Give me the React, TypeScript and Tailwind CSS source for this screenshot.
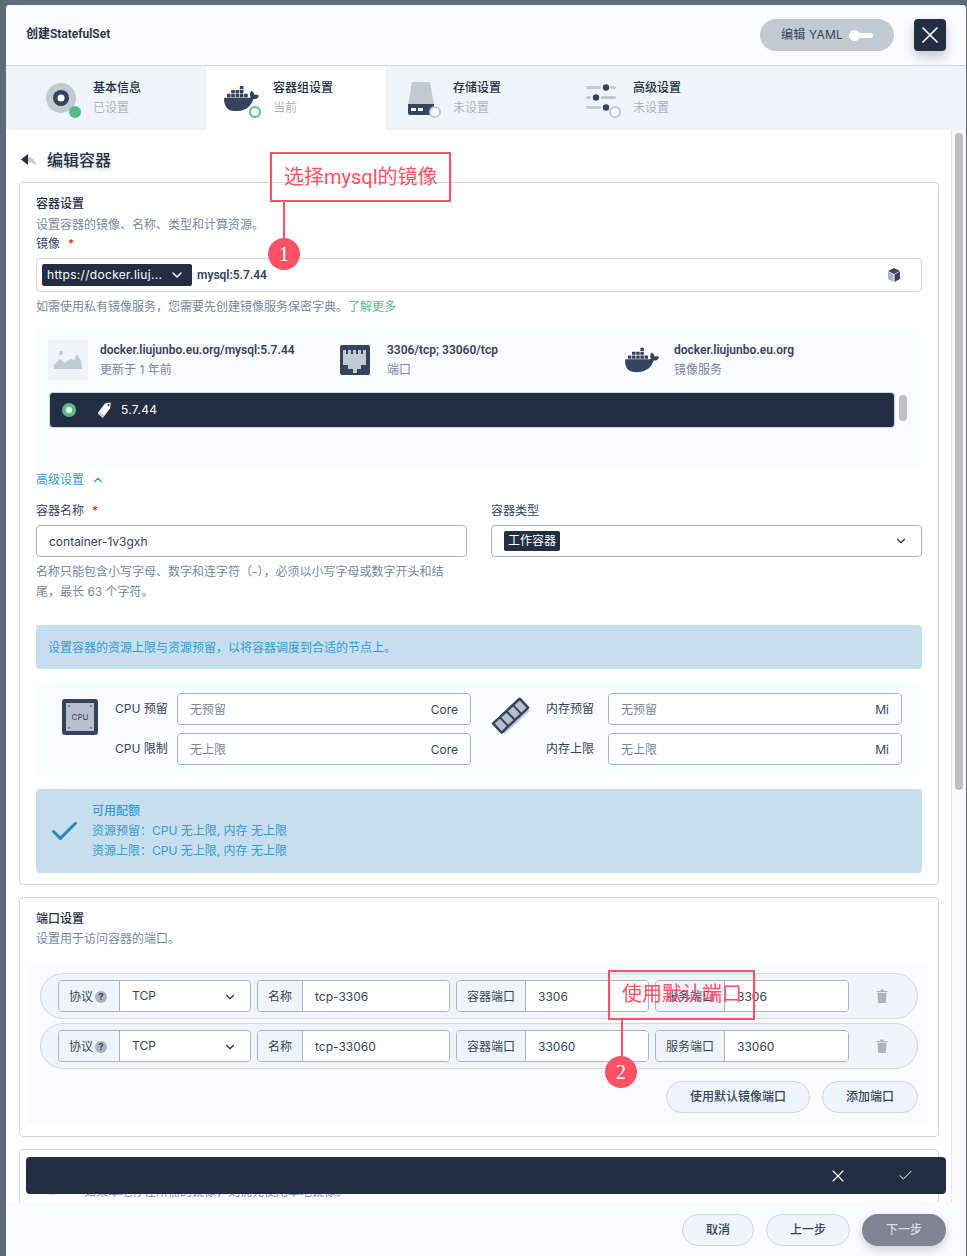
import React from "react";
import { SiDocker } from "react-icons/si";
import { ChevronDown, ChevronUp, X, Check } from "lucide-react";

const font = { fontFamily: 'Inter, "Noto Sans CJK SC", sans-serif' };
const BOLD = "font-[Roboto,'Noto_Sans_CJK_SC',sans-serif] font-semibold";
const MED = "font-medium";

function Badge({ kind }: { kind: "done" | "cur" | "todo" }) {
  const cls =
    kind === "done"
      ? "bg-[#55bc8a]"
      : kind === "cur"
        ? "bg-white border-2 border-[#55bc8a]"
        : "bg-white border-2 border-[#c1c9d1]";
  return <span className={"absolute left-[26px] top-[26px] w-3 h-3 rounded-full " + cls} />;
}

function Tab({ icon, title, sub, badge, active }: { icon: React.ReactNode; title: string; sub: string; badge: "done" | "cur" | "todo"; active?: boolean }) {
  return (
    <div className={"w-[180px] flex items-center pl-[17px] gap-[14px] " + (active ? "bg-white" : "")}>
      <div className="relative w-9 h-9 flex items-center justify-center">
        {icon}
        <Badge kind={badge} />
      </div>
      <div>
        <div className={"text-[12px] leading-5 text-[#242e42] " + MED}>{title}</div>
        <div className="text-[12px] leading-5 text-[#abb4be]">{sub}</div>
      </div>
    </div>
  );
}

function DiscIcon() {
  return (
    <svg width="30" height="30" viewBox="0 0 30 30">
      <circle cx="15" cy="15" r="15" fill="#c1c9d1" />
      <circle cx="15" cy="15" r="8" fill="#36435c" />
      <circle cx="15" cy="15" r="3.5" fill="#fff" />
    </svg>
  );
}

function DiskIcon() {
  return (
    <svg width="28" height="34" viewBox="0 0 28 34">
      <path d="M5 1h18l4 23H1z" fill="#c1c9d1" />
      <path d="M1 23h26v9a2 2 0 0 1-2 2H3a2 2 0 0 1-2-2z" fill="#36435c" />
      <rect x="4" y="27" width="5" height="3" fill="#fff" />
      <rect x="11" y="27" width="5" height="3" fill="#fff" />
    </svg>
  );
}

function SlidersIcon() {
  return (
    <svg width="30" height="30" viewBox="0 0 30 30">
      <g fill="#c1c9d1">
        <rect x="0" y="3" width="15" height="3" rx="1.5" />
        <rect x="24" y="3" width="6" height="3" rx="1.5" />
        <rect x="0" y="13" width="5" height="3" rx="1.5" />
        <rect x="15" y="13" width="15" height="3" rx="1.5" />
        <rect x="0" y="23" width="15" height="3" rx="1.5" />
      </g>
      <g fill="#36435c">
        <circle cx="20" cy="4.5" r="3.2" />
        <circle cx="10" cy="14.5" r="3.2" />
        <circle cx="20" cy="24.5" r="3.2" />
      </g>
    </svg>
  );
}

function BackIcon() {
  return (
    <svg width="16" height="14" viewBox="0 0 16 14">
      <path d="M7 4c4 0 7 3 8.500 9C13 10 10.500 9 7 9z" fill="#c1c9d1" />
      <path d="M7 1v11L0 6.500z" fill="#242e42" />
    </svg>
  );
}

function CubeIcon() {
  return (
    <svg width="12" height="14" viewBox="0 0 12 14">
      <path d="M6 0l6 3-6 3-6-3z" fill="#36435c" />
      <path d="M0 3.500l5.500 3V14L0 11z" fill="#abb4be" />
      <path d="M12 3.500l-5.500 3V14L12 11z" fill="#36435c" />
    </svg>
  );
}

function ImageIcon() {
  return (
    <div className="w-10 h-10 bg-[#eff4f9] rounded-[2px] flex items-center justify-center">
      <svg width="28" height="20" viewBox="0 0 28 20">
        <circle cx="7" cy="3" r="2" fill="#c1c9d1" />
        <path d="M0 19v-4l6-6 5 4 5-4 4 1 3-6 4 7 1 8z" fill="#c1c9d1" />
      </svg>
    </div>
  );
}

function PortIcon() {
  return (
    <svg width="30" height="30" viewBox="0 0 30 30">
      <rect width="30" height="30" rx="2" fill="#36435c" />
      <path d="M3 5h3v4h2V5h3v4h2V5h3v4h2V5h3v4h2V5h3v15h-5v4h-4v4h-4v-4H8v-4H3z" fill="#c1c9d1" />
    </svg>
  );
}

function TagIcon() {
  return (
    <svg width="15" height="16" viewBox="0 0 15 16">
      <path d="M8 1.500L12.500 0.500a1 1 0 0 1 1.200 1.200L13 6.500 6.500 15a1 1 0 0 1-1.400 0.200L1.300 12a1 1 0 0 1-0.200-1.400z" fill="#fff" />
      <path d="M6.500 15a1 1 0 0 1-1.400 0.200L1.300 12a1 1 0 0 1-0.200-1.400l0.900-1.100 5.500 4.300z" fill="#c1c9d1" />
      <circle cx="11.500" cy="3" r="1" fill="#242e42" />
    </svg>
  );
}

function CpuIcon() {
  return (
    <svg width="36" height="36" viewBox="0 0 36 36" className="mt-[6px] shrink-0">
      <rect width="36" height="36" rx="3" fill="#36435c" />
      <rect x="4" y="4" width="28" height="28" fill="#b6c1cd" />
      <g fill="#36435c">
        <circle cx="7" cy="7" r="0.8" />
        <circle cx="29" cy="7" r="0.8" />
        <circle cx="7" cy="29" r="0.8" />
        <circle cx="29" cy="29" r="0.8" />
      </g>
      <text x="18" y="20.5" textAnchor="middle" fontSize="8" fill="#36435c" style={font}>CPU</text>
    </svg>
  );
}

function MemIcon() {
  return (
    <svg width="40" height="40" viewBox="0 0 40 40" className="mt-[3px] shrink-0">
      <g transform="rotate(-43 20 20)">
        <rect x="3" y="26" width="34" height="3" fill="#c1c9d1" />
        <rect x="0.500" y="12" width="39" height="15" rx="1.500" fill="#36435c" />
        <g fill="#b6c1cd">
          <rect x="3" y="14.500" width="7" height="10" />
          <rect x="12" y="14.500" width="7" height="10" />
          <rect x="21" y="14.500" width="7" height="10" />
          <rect x="30" y="14.500" width="7" height="10" />
        </g>
      </g>
    </svg>
  );
}

function TrashIcon() {
  return (
    <svg width="12" height="14" viewBox="0 0 12 14">
      <path d="M0.500 2h3.500l0.500-1.500h3L8 2h3.500v1.200H0.500z" fill="#abb4be" />
      <path d="M1.500 4h9l-0.700 9.500a0.500 0.500 0 0 1-0.500 0.500H2.700a0.500 0.500 0 0 1-0.500-0.500z" fill="#abb4be" />
    </svg>
  );
}

function FieldBox({ w, text, unit, placeholder }: { w: string; text: string; unit?: string; placeholder?: boolean }) {
  return (
    <div className={"h-8 border border-[#abb4be] rounded-[4px] bg-white flex items-center justify-between pl-3 pr-3 pt-px text-[12px] " + w}>
      <span className={placeholder ? "text-[#79879c]" : "text-[#36435c]"}>{text}</span>
      {unit && <span className="text-[#36435c]">{unit}</span>}
    </div>
  );
}

function PortGroup({ label, value, labelW, w, select }: { label: React.ReactNode; value: string; labelW: string; w: string; select?: boolean }) {
  return (
    <div className={"h-8 flex border border-[#abb4be] rounded-[4px] overflow-hidden text-[12px] text-[#36435c] " + w}>
      <div className={"bg-[#eff4f9] border-r border-[#abb4be] flex items-center justify-center pt-px " + labelW}>{label}</div>
      <div className="flex-1 bg-white flex items-center justify-between pl-3 pr-[13px] pt-px">
        <span className={select ? "-translate-y-px" : ""}>{value}</span>
        {select && <ChevronDown size={14} strokeWidth={2} className="text-[#242e42]" />}
      </div>
    </div>
  );
}

function PortRow({ name, port }: { name: string; port: string }) {
  return (
    <div className="h-[46px] w-[878px] rounded-[23px] border border-[#d1d7df] bg-[#eff4f9] flex items-center pl-[17px] gap-[6px]">
      <PortGroup
        w="w-[193px]"
        labelW="w-[61px]"
        select
        value="TCP"
        label={
          <span className="flex items-center gap-[2px] -ml-[2px]">
            协议
            <span className="w-3 h-3 mt-px rounded-full bg-[#abb4be] text-[#36435c] text-[9px] leading-3 font-bold text-center">?</span>
          </span>
        }
      />
      <PortGroup w="w-[193px]" labelW="w-[45px]" label="名称" value={name} />
      <PortGroup w="w-[193px]" labelW="w-[69px]" label="容器端口" value={port} />
      <PortGroup w="w-[194px]" labelW="w-[69px]" label="服务端口" value={port} />
      <div className="ml-[21px] flex items-center">
        <TrashIcon />
      </div>
    </div>
  );
}

function PillBtn({ w, children, primary }: { w: string; children: React.ReactNode; primary?: boolean }) {
  return (
    <div
      className={
        "h-8 rounded-2xl flex items-center justify-center text-[12px] font-medium " +
        (primary
          ? "bg-[#7f8594] text-[#d8dee5] shadow-[0_4px_8px_rgba(36,46,66,0.2)] "
          : "bg-[#eff4f9] border border-[#d1d7df] text-[#36435c] ") +
        w
      }
    >
      {children}
    </div>
  );
}

function InfoCol({ icon, title, sub }: { icon: React.ReactNode; title: string; sub: string }) {
  return (
    <div className="w-[287px] flex items-center">
      <div className="w-10 h-10 flex items-center justify-center shrink-0">{icon}</div>
      <div className="ml-3">
        <div className={"text-[12px] leading-5 text-[#36435c] " + BOLD}>{title}</div>
        <div className="text-[12px] leading-5 text-[#79879c]">{sub}</div>
      </div>
    </div>
  );
}

function Callout({ boxClass, textClass, text, lineClass, circleClass, n }: { boxClass: string; textClass: string; text: string; lineClass: string; circleClass: string; n: string }) {
  return (
    <>
      <div className={"absolute border-2 border-[#ff5266] " + boxClass}>
        <span className={"absolute whitespace-nowrap text-[20px] leading-7 text-[#ff5266] font-[Roboto,'Noto_Sans_CJK_SC',sans-serif] " + textClass}>{text}</span>
      </div>
      <div className={"absolute w-[2px] bg-[#ff5266] " + lineClass} />
      <div
        className={"absolute w-8 h-8 rounded-full bg-[#ff5266] text-white text-[20px] flex items-center justify-center " + circleClass}
        style={{ fontFamily: '"Liberation Serif", serif' }}
      >
        {n}
      </div>
    </>
  );
}

export default function App() {
  return (
    <div className="relative w-[967px] h-[1256px] overflow-hidden bg-[#5f6a7a] pl-[6px] pr-px pt-[5px] text-[#242e42]" style={font}>
      <div className="w-[960px] h-full rounded-t-[4px] overflow-hidden flex flex-col bg-white">
        {/* header */}
        <div className="h-[61px] shrink-0 bg-[#fbfcfe] border-b border-[#d1d7df] flex items-center justify-between pl-5 pr-5">
          <div className={"text-[12px] leading-5 pb-[2px] " + BOLD}>创建StatefulSet</div>
          <div className="flex items-center gap-5">
            <div className="w-[134px] h-8 rounded-2xl bg-[#c1c9d1] flex items-center pl-[21px] gap-[6px] text-[12px] tracking-[0.2px] text-[#36435c]">
              <span>编辑 YAML</span>
              <span className="relative w-6 h-[5px] rounded-full bg-white">
                <span className="absolute left-0 top-[-3px] w-[11px] h-[11px] rounded-full bg-white" />
              </span>
            </div>
            <div className="w-8 h-8 rounded-[4px] bg-[#242e42] flex items-center justify-center text-white shadow-[0_6px_12px_rgba(36,46,66,0.25)]">
              <X size={28} strokeWidth={1.5} />
            </div>
          </div>
        </div>
        {/* tabs */}
        <div className="h-[64px] shrink-0 bg-[#eff4f9] flex pl-5">
          <Tab icon={<DiscIcon />} title="基本信息" sub="已设置" badge="done" />
          <Tab icon={<SiDocker size={35} color="#36435c" />} title="容器组设置" sub="当前" badge="cur" active />
          <Tab icon={<DiskIcon />} title="存储设置" sub="未设置" badge="todo" />
          <Tab icon={<SlidersIcon />} title="高级设置" sub="未设置" badge="todo" />
        </div>
        {/* body */}
        <div className="flex-1 min-h-0 flex overflow-hidden">
          <div className="w-[945px] pl-[13px] pr-3 pt-5 overflow-hidden">
            <div className="flex items-center h-5 pl-[2px]">
              <BackIcon />
              <span className={"ml-[10px] text-[16px] leading-5 [text-shadow:0_2px_4px_rgba(36,46,66,0.2)] " + MED}>编辑容器</span>
            </div>
            {/* card 1 */}
            <div className="mt-3 w-[920px] border border-[#d1d7df] rounded-[4px] px-4 pt-[11px] pb-[11px]">
              <div className={"text-[12px] leading-5 " + MED}>容器设置</div>
              <div className="mt-px text-[12px] leading-5 text-[#79879c]">设置容器的镜像、名称、类型和计算资源。</div>
              <div className="-mt-px text-[12px] leading-5 text-[#36435c]">
                镜像<span className="ml-2 text-[#ca2621]">*</span>
              </div>
              <div className="mt-[4px] h-[34px] border border-[#d1d7df] rounded-[4px] flex items-center pl-[5px] pr-[21px]">
                <div className="w-[150px] h-[22px] bg-[#242e42] rounded-[2px] text-white text-[12px] tracking-[0.3px] flex items-center justify-between pl-[5px] pr-[7px]">
                  <span>https://docker.liuj...</span>
                  <ChevronDown size={16} strokeWidth={2} />
                </div>
                <span className={"ml-[5px] text-[12px] text-[#36435c] flex-1 " + BOLD}>mysql:5.7.44</span>
                <CubeIcon />
              </div>
              <div className="mt-[5px] text-[12px] leading-5 text-[#79879c]">
                如需使用私有镜像服务，您需要先创建镜像服务保密字典。<span className="text-[#55bc8a]">了解更多</span>
              </div>
              {/* image panel */}
              <div className="mt-[11px] h-[140px] bg-[#f9fbfd] rounded-[4px] pt-3 pl-3">
                <div className="flex">
                  <InfoCol icon={<ImageIcon />} title="docker.liujunbo.eu.org/mysql:5.7.44" sub="更新于 1 年前" />
                  <InfoCol icon={<PortIcon />} title="3306/tcp; 33060/tcp" sub="端口" />
                  <InfoCol icon={<SiDocker size={34} color="#36435c" />} title="docker.liujunbo.eu.org" sub="镜像服务" />
                </div>
                <div className="mt-3 flex h-9">
                  <div className="ml-px w-[846px] h-9 bg-[#242e42] rounded-[4px] border border-[#d1d7df] flex items-center pl-3">
                    <span className="w-[14px] h-[14px] rounded-full bg-[#55bc8a] flex items-center justify-center">
                      <span className="w-[6px] h-[6px] rounded-full bg-white" />
                    </span>
                    <span className="ml-[21px]"><TagIcon /></span>
                    <span className="ml-[9px] text-[12px] tracking-[0.3px] text-white">5.7.44</span>
                  </div>
                  <div className="w-[15px] border-x border-[#eff4f9] flex justify-center pt-[3px]">
                    <div className="w-2 h-[26px] rounded-full bg-[#bfbfbf]" />
                  </div>
                </div>
              </div>
              <div className="mt-[2px] flex items-center gap-[7px] text-[12px] leading-5 text-[#329dce]">
                高级设置
                <ChevronUp size={14} strokeWidth={2} />
              </div>
              {/* name + type */}
              <div className="mt-[11px] flex gap-6">
                <div className="w-[431px]">
                  <div className="text-[12px] leading-5 text-[#36435c]">
                    容器名称<span className="ml-2 text-[#ca2621]">*</span>
                  </div>
                  <FieldBox w="mt-[4px] w-full" text="container-1v3gxh" />
                  <div className="mt-[5px] w-[416px] text-[12px] leading-5 text-[#79879c]">
                    名称只能包含小写字母、数字和连字符（-），必须以小写字母或数字开头和结尾，最长 63 个字符。
                  </div>
                </div>
                <div className="w-[431px]">
                  <div className="text-[12px] leading-5 text-[#36435c]">容器类型</div>
                  <div className="mt-[4px] h-8 border border-[#abb4be] rounded-[4px] flex items-center justify-between pl-3 pr-[13px]">
                    <span className="h-5 px-1 bg-[#242e42] rounded-[2px] text-white text-[12px] leading-5">工作容器</span>
                    <ChevronDown size={14} strokeWidth={2} />
                  </div>
                </div>
              </div>
              {/* banner */}
              <div className="mt-[23px] h-11 bg-[#c7deef] rounded-[4px] pl-3 pt-px flex items-center text-[12px] text-[#329dce]">
                设置容器的资源上限与资源预留，以将容器调度到合适的节点上。
              </div>
              {/* resources */}
              <div className="mt-3 h-24 bg-[#f9fbfd] rounded-[4px] flex items-start pt-3 pl-[26px]">
                <CpuIcon />
                <div className="ml-[17px] grid grid-cols-[62px_294px] gap-y-2 items-center text-[12px] text-[#36435c]">
                  <span>CPU 预留</span>
                  <FieldBox w="w-[294px]" text="无预留" unit="Core" placeholder />
                  <span>CPU 限制</span>
                  <FieldBox w="w-[294px]" text="无上限" unit="Core" placeholder />
                </div>
                <div className="ml-5"><MemIcon /></div>
                <div className="ml-[15px] grid grid-cols-[62px_294px] gap-y-2 items-center text-[12px] text-[#36435c]">
                  <span>内存预留</span>
                  <FieldBox w="w-[294px]" text="无预留" unit="Mi" placeholder />
                  <span>内存上限</span>
                  <FieldBox w="w-[294px]" text="无上限" unit="Mi" placeholder />
                </div>
              </div>
              {/* quota */}
              <div className="mt-3 h-[84px] bg-[#c7deef] rounded-[4px] flex items-center pl-3">
                <Check size={33} strokeWidth={2.2} className="text-[#2f88b5]" />
                <div className="ml-[11px] text-[12px] leading-5 text-[#329dce]">
                  <div className={MED}>可用配额</div>
                  <div>资源预留：CPU 无上限, 内存 无上限</div>
                  <div>资源上限：CPU 无上限, 内存 无上限</div>
                </div>
              </div>
            </div>
            {/* card 2 */}
            <div className="mt-3 w-[920px] border border-[#d1d7df] rounded-[4px] pt-[11px] px-2 pb-[11px]">
              <div className={"pl-2 text-[12px] leading-5 " + MED}>端口设置</div>
              <div className="pl-2 text-[12px] leading-5 text-[#79879c]">设置用于访问容器的端口。</div>
              <div className="mt-3 h-[164px] bg-[#f9fbfd] rounded-[4px] p-3 flex flex-col gap-1">
                <PortRow name="tcp-3306" port="3306" />
                <PortRow name="tcp-33060" port="33060" />
                <div className="mt-2 flex justify-end gap-3">
                  <PillBtn w="w-[144px]">使用默认镜像端口</PillBtn>
                  <PillBtn w="w-[96px]">添加端口</PillBtn>
                </div>
              </div>
            </div>
            {/* card 3 */}
            <div className="mt-3 w-[920px] border border-[#d1d7df] rounded-[4px] pt-8 pl-[23px] h-[80px] flex gap-[23px]">
              <div className="w-[18px] h-[18px] mt-[-5px] rounded-full bg-[#d1d7df]" />
              <div className="text-[12px] leading-5 text-[#79879c]">如果本地存在所需的镜像，则优先使用本地镜像。</div>
            </div>
          </div>
          {/* scrollbar */}
          <div className="w-[15px] border-l border-[#e8e8e8] bg-[#fafafa] pl-[3px] pt-[3px]">
            <div className="w-2 h-[657px] rounded-full bg-[#bfbfbf]" />
          </div>
        </div>
        {/* footer */}
        <div className="h-[54px] shrink-0 bg-[#f9fbfd] flex items-center justify-end gap-3 pr-5 pt-[2px]">
          <PillBtn w="w-[72px]">取消</PillBtn>
          <PillBtn w="w-[84px]">上一步</PillBtn>
          <PillBtn w="w-[84px]" primary>下一步</PillBtn>
        </div>
      </div>

      {/* dark notification bar over the content */}
      <div className="absolute left-[26px] top-[1157px] w-[920px] h-[37px] bg-[#242e42] rounded-[4px] text-white">
        <X size={20} strokeWidth={1.3} className="absolute left-[802px] top-[9px]" />
        <Check size={17} strokeWidth={1.4} className="absolute left-[871px] top-[10px]" />
      </div>

      {/* annotations */}
      <Callout boxClass="left-[270px] top-[152px] w-[181px] h-[50px]" textClass="left-[12px] top-[9px]" text="选择mysql的镜像" lineClass="left-[283px] top-[202px] h-[40px]" circleClass="left-[268px] top-[238px]" n="1" />
      <Callout boxClass="left-[608px] top-[970px] w-[147px] h-[50px]" textClass="left-[12px] top-[8px]" text="使用默认端口" lineClass="left-[621px] top-[1020px] h-[40px]" circleClass="left-[605px] top-[1056px]" n="2" />
    </div>
  );
}
